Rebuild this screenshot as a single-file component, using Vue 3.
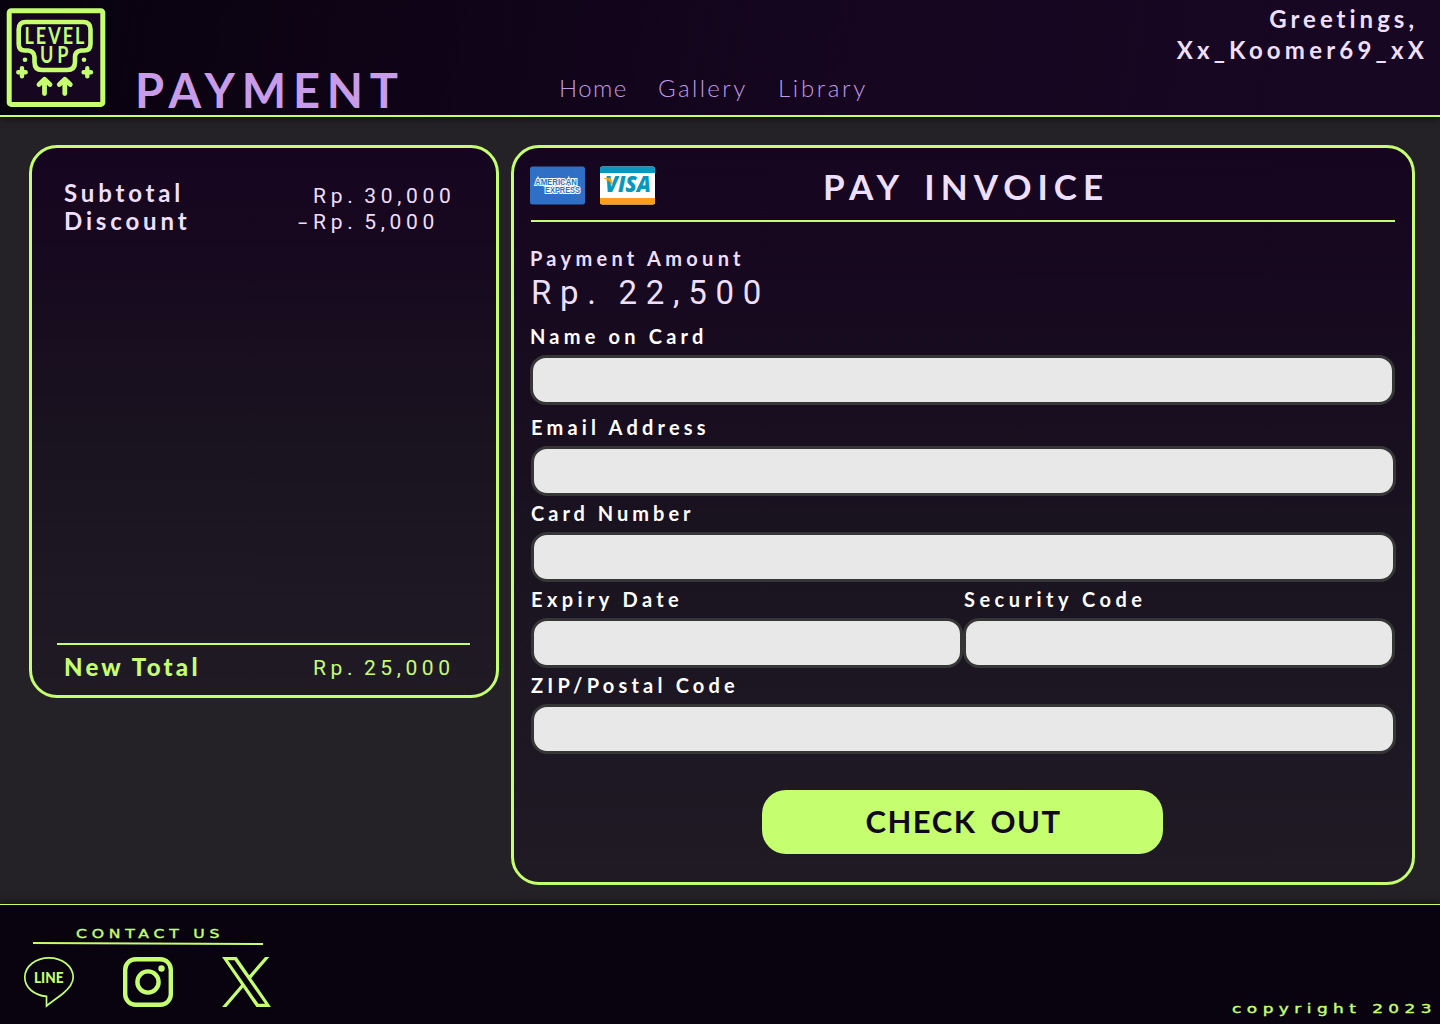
<script setup>
const links = ['Home', 'Gallery', 'Library']
const fields = [
  { id: 'name', label: 'Name on Card' },
  { id: 'email', label: 'Email Address' },
  { id: 'number', label: 'Card Number' },
  { id: 'expiry', label: 'Expiry Date' },
  { id: 'security', label: 'Security Code' },
  { id: 'zip', label: 'ZIP/Postal Code' },
]
</script>

<template>
  <div class="page">
    <header class="top">
      <svg class="logo" width="112" height="115" viewBox="0 0 112 115" fill="none">
        <rect x="9.2" y="10.8" width="93.6" height="93.6" rx="2" fill="#160620" stroke="#c5ff70" stroke-width="5" />
        <path d="M26 22H83Q90.5 22 90.5 29.500V44Q90.500 50.500 84 50.500H81Q75 51.500 75 57V62Q75 70 67 70H42Q34.500 70 34.500 62V57Q34 51 28 50.500H25Q18.700 50.500 18.700 44V29.500Q18.700 22 26 22Z" stroke="#c5ff70" stroke-width="4.600" />
        <g class="logo-text" transform="scale(0.8 1)">
          <text x="30.500" y="44" textLength="75" lengthAdjust="spacing">LEVEL</text>
          <text x="50" y="63.300" textLength="35.500" lengthAdjust="spacing">UP</text>
        </g>
        <path d="M44.500 93.500V80M39 84.500L44.500 79.300L50 84.500M64.800 93.500V80M59.300 84.500L64.800 79.300L70.300 84.500" stroke="#c5ff70" stroke-width="4.800" stroke-linecap="round" stroke-linejoin="round" />
        <path d="M22 68.300V76.300M18.300 72.300H25.700M87.300 68.300V76.300M83.600 72.300H91" stroke="#c5ff70" stroke-width="4.400" stroke-linecap="round" />
        <circle cx="25" cy="59.800" r="2.300" fill="#c5ff70" />
        <circle cx="84" cy="59.800" r="2.300" fill="#c5ff70" />
      </svg>
      <h1>PAYMENT</h1>
      <nav>
        <a v-for="l in links" :key="l" :class="l.toLowerCase()">{{ l }}</a>
      </nav>
      <div class="greeting">
        <span class="hello">Greetings,</span>
        <span class="user">Xx_Koomer69_xX</span>
      </div>
    </header>

    <main>
      <section class="card summary">
        <div class="rows">
          <div class="names">
            <span class="subtotal">Subtotal</span>
            <span class="discount">Discount</span>
          </div>
          <div class="values">
            <span>Rp. 30,000</span>
            <span class="discount-value"><span class="minus">-</span>Rp. 5,000</span>
          </div>
        </div>
        <div class="total">
          <strong>New Total</strong>
          <span>Rp. 25,000</span>
        </div>
      </section>

      <section class="card invoice">
        <div class="invoice-head">
          <svg width="55" height="39" viewBox="0 0 55 39">
            <rect y=".4" width="55" height="38.200" rx="2.500" fill="#306fc6" />
            <g class="amex">
              <text x="5" y="18.700" textLength="42" lengthAdjust="spacingAndGlyphs">AMERICAN</text>
              <text x="15" y="27.400" textLength="35" lengthAdjust="spacingAndGlyphs">EXPRESS</text>
            </g>
          </svg>
          <svg width="55" height="39" viewBox="0 0 55 39">
            <rect y=".4" width="55" height="38.200" rx="2.500" fill="#fff" />
            <path d="M0 7V2.900Q0 .4 2.500 .4H52.500Q55 .4 55 2.900V7Z" fill="#0698bd" />
            <path d="M0 32V36Q0 38.600 2.500 38.600H52.500Q55 38.600 55 36V32Z" fill="#f99f1b" />
            <text class="visa" x="5" y="26.300" textLength="46" lengthAdjust="spacingAndGlyphs">VISA</text>
            <path d="M3.500 12H9.500Q11 12 11.400 13.500L12.800 20Q10 14.500 3.500 12Z" fill="#f99f1b" />
          </svg>
          <h2>PAY INVOICE</h2>
        </div>
        <p class="amount-label">Payment Amount</p>
        <p class="amount">Rp. 22,500</p>
        <form @submit.prevent>
          <div v-for="f in fields" :key="f.id" class="field" :class="f.id">
            <label :for="f.id">{{ f.label }}</label>
            <input :id="f.id" type="text" />
          </div>
          <button type="submit">CHECK OUT</button>
        </form>
      </section>
    </main>

    <footer>
      <div class="contact">
        <h3>CONTACT US</h3>
        <svg class="rule" width="230" height="4" viewBox="0 0 230 4">
          <path d="M0 1L230 2" stroke="#c5ff70" stroke-width="2" />
        </svg>
        <div class="socials">
          <svg width="50" height="50" viewBox="0 0 50 50" fill="none">
            <path d="M22.500 39.400C10 38.300 .8 30.500 .8 20.300C.8 9.500 11.600 .8 25 .8S49.200 9.500 49.200 20.300C49.200 27 45 31.500 39 36.500C34 40.500 28 44.500 22.500 49Z" stroke="#c5ff70" stroke-width="1.700" />
            <text class="line" x="10" y="25.500" textLength="29.500" lengthAdjust="spacingAndGlyphs">LINE</text>
          </svg>
          <svg width="50" height="50" viewBox="0 0 50 50" fill="none" stroke="#c5ff70">
            <rect x="2.200" y="2.200" width="45.600" height="45.600" rx="10.500" stroke-width="4.400" />
            <circle cx="25" cy="25" r="10.600" stroke-width="4.400" />
            <circle cx="38.500" cy="11.500" r="3.200" fill="#c5ff70" stroke="none" />
          </svg>
          <svg width="49" height="50" viewBox="0 0 1200 1227">
            <path fill="#c5ff70" d="M714.163 519.284L1160.890 0H1055.030L667.137 450.887L357.328 0H0L468.492 681.821L0 1226.370H105.866L515.491 750.218L842.672 1226.370H1200L714.137 519.284ZM569.165 687.828L521.697 619.934L144.011 79.694H306.615L611.412 515.685L658.880 583.579L1055.080 1150.300H892.476L569.165 687.854Z" />
          </svg>
        </div>
      </div>
      <p class="copy">copyright 2023</p>
    </footer>
  </div>
</template>

<style>
body {
  margin: 0;
  background: #242127;
}
</style>

<style scoped>
* {
  box-sizing: border-box;
}
h1, h2, h3, p {
  margin: 0;
}
svg {
  overflow: visible;
}
.page {
  display: flex;
  flex-direction: column;
  width: 1440px;
  height: 1024px;
  background: #242127;
  font-family: Lato, sans-serif;
  font-weight: 700;
  white-space: nowrap;
  overflow: hidden;
}
.top {
  display: flex;
  align-items: flex-start;
  height: 117px;
  border-bottom: 2px solid #c5ff70;
  background: linear-gradient(100deg, #08020e 0%, #160620 60%, #180722 100%);
  box-shadow: 0 2px 8px rgba(0, 0, 0, 0.45);
}
.logo {
  flex: none;
}
.logo-text {
  font: 700 22.500px Lato, sans-serif;
  fill: #c5ff70;
}
h1 {
  width: 424px;
  margin: 67px 0 0 23px;
  font-size: 47px;
  line-height: 47px;
  letter-spacing: 6.800px;
  color: #c89ce8;
}
nav {
  display: flex;
  padding-top: 76px;
  font-size: 24px;
  font-weight: 300;
  line-height: 24px;
  letter-spacing: 2.400px;
  color: #c39ae6;
}
nav a {
  width: 120px;
}
nav .home {
  width: 99px;
  letter-spacing: 1.400px;
}
nav .library {
  letter-spacing: 2.700px;
}
.greeting {
  display: flex;
  flex-direction: column;
  align-items: flex-end;
  margin-left: auto;
  padding: 3px 12px 0 0;
  font-size: 24px;
  line-height: 31px;
  letter-spacing: 4px;
  color: #efdfff;
}
.hello {
  margin-right: 10px;
}
.user {
  letter-spacing: 4.200px;
}
main {
  display: flex;
  align-items: flex-start;
  gap: 12px;
  height: 787px;
  padding: 28px 25px 0 29px;
}
.card {
  border: 3px solid #c5ff70;
  border-radius: 28px;
  background: linear-gradient(180deg, #16051f 0%, #17091f 20%, #19121f 50%, #1e1824 85%, #201a25 100%);
}
.summary {
  display: flex;
  flex-direction: column;
  justify-content: space-between;
  width: 470px;
  height: 553px;
  padding: 31px 26px 0 25px;
  color: #efdfff;
}
.rows {
  display: flex;
  padding-left: 7px;
}
.names, .values {
  display: flex;
  flex-direction: column;
  font-size: 24px;
  line-height: 28px;
  letter-spacing: 3.850px;
}
.names {
  width: 249px;
}
.values, .total > span {
  font: 400 21px/26px Roboto, sans-serif;
  letter-spacing: 4.700px;
  word-spacing: -3px;
}
.values {
  padding-top: 4px;
}
.discount-value {
  margin-left: -15px;
}
.minus {
  display: inline-block;
  width: 15px;
  transform: scaleX(1.600);
  transform-origin: left;
}
.total {
  display: flex;
  height: 52px;
  padding: 8px 0 0 7px;
  border-top: 2px solid #c5ff70;
  color: #c5ff70;
}
.total strong {
  width: 249px;
  font-size: 24px;
  line-height: 28px;
  letter-spacing: 3.250px;
}
.total > span {
  padding-top: 2px;
  letter-spacing: 4.600px;
}
.invoice {
  width: 904px;
  height: 740px;
  padding: 18px 16px 0 16px;
  color: #efdfff;
}
.invoice-head {
  display: flex;
  gap: 15px;
  height: 56px;
  margin: 0 1px;
  border-bottom: 2px solid #c5ff70;
}
.invoice-head svg {
  flex: none;
  margin-left: -1px;
  margin-right: 1px;
}
.amex text {
  font: 700 9px "Liberation Sans", sans-serif;
  fill: #306fc6;
  stroke: #fff;
  stroke-width: 2.200px;
  paint-order: stroke;
}
.visa {
  font: italic 800 22px "Open Sans", sans-serif;
  fill: #0698bd;
}
h2 {
  margin: 3px 0 0 152px;
  font-size: 35px;
  line-height: 35px;
  letter-spacing: 6px;
  word-spacing: 6px;
}
.amount-label {
  padding-top: 26px;
  font-size: 20px;
  line-height: 21px;
  letter-spacing: 4.300px;
}
.amount {
  height: 56px;
  padding: 4px 0 0 1px;
  font: 400 33px/39px Roboto, sans-serif;
  letter-spacing: 8.700px;
  word-spacing: -3px;
}
form {
  display: flex;
  flex-wrap: wrap;
  width: 866px;
  margin-left: 1px;
  color: #fff;
}
.field {
  width: 865px;
  height: 86px;
}
label {
  display: block;
  height: 30px;
  font-size: 20px;
  line-height: 22px;
  letter-spacing: 4.200px;
}
.number label {
  letter-spacing: 4px;
}
.expiry label {
  letter-spacing: 4.400px;
}
.security label {
  padding-left: 1px;
  letter-spacing: 4.500px;
}
input {
  display: block;
  width: 100%;
  height: 50px;
  border: 3px solid #363636;
  border-radius: 16px;
  background: #e8e8e8;
}
.name {
  height: 91px;
  margin-left: -1px;
}
.expiry, .security {
  width: 432px;
}
button {
  width: 401px;
  height: 64px;
  margin: 30px 0 0 231px;
  padding: 0 0 2px 2px;
  border: 0;
  border-radius: 24px;
  background: #c5ff70;
  color: #12081a;
  font: 700 31px/62px Lato, sans-serif;
  letter-spacing: 1.500px;
  word-spacing: 5px;
}
footer {
  display: flex;
  justify-content: space-between;
  align-items: flex-end;
  height: 120px;
  border-top: 1px solid #c5ff70;
  background: #090310;
  box-shadow: 0 -2px 8px rgba(0, 0, 0, 0.45);
  color: #c5ff70;
}
.contact {
  align-self: flex-start;
  padding: 20px 0 0 24px;
}
h3 {
  height: 17px;
  margin-left: 52px;
  font: 400 13px/17px "DejaVu Sans", sans-serif;
  letter-spacing: 4px;
  -webkit-text-stroke: 0.400px #c5ff70;
  transform: scaleX(1.200);
  transform-origin: left;
}
.rule {
  display: block;
  margin-left: 9px;
}
.socials {
  display: flex;
  gap: 49px;
  padding-top: 11px;
}
.line {
  font: 900 15px Lato, sans-serif;
  fill: #c5ff70;
}
.copy {
  padding: 0 2px 7px 0;
  font: 400 13px/17px "DejaVu Sans", sans-serif;
  letter-spacing: 4.200px;
  -webkit-text-stroke: 0.400px #c5ff70;
  transform: scaleX(1.300);
  transform-origin: right;
}
</style>
